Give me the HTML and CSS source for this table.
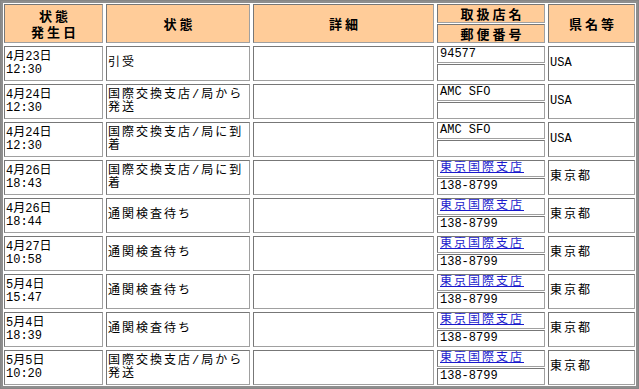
FILE: index.html
```html
<!DOCTYPE html>
<html lang="ja">
<head>
<meta charset="utf-8">
<title>追跡情報</title>
<link rel="stylesheet" href="styles.css">
</head>
<body>
<table class="track">
  <colgroup>
    <col class="c1"><col class="c2"><col class="c3"><col class="c4"><col class="c5">
  </colgroup>
  <thead>
    <tr class="head">
      <th class="h">状態<br>発生日</th>
      <th class="h">状態</th>
      <th class="h">詳細</th>
      <th class="split"><div class="pair"><div class="h sub">取扱店名</div><div class="h sub">郵便番号</div></div></th>
      <th class="h">県名等</th>
    </tr>
  </thead>
  <tbody>
    <tr>
      <td class="date">4月23日<br>12:30</td>
      <td class="st">引受</td>
      <td></td>
      <td class="split"><div class="pair"><div class="box">94577</div><div class="box"></div></div></td>
      <td class="pref">USA</td>
    </tr>
    <tr>
      <td class="date">4月24日<br>12:30</td>
      <td class="st">国際交換支店/局から発送</td>
      <td></td>
      <td class="split"><div class="pair"><div class="box">AMC SFO</div><div class="box"></div></div></td>
      <td class="pref">USA</td>
    </tr>
    <tr>
      <td class="date">4月24日<br>12:30</td>
      <td class="st">国際交換支店/局に到着</td>
      <td></td>
      <td class="split"><div class="pair"><div class="box">AMC SFO</div><div class="box"></div></div></td>
      <td class="pref">USA</td>
    </tr>
    <tr>
      <td class="date">4月26日<br>18:43</td>
      <td class="st">国際交換支店/局に到着</td>
      <td></td>
      <td class="split"><div class="pair"><div class="box"><a class="lk" href="#">東京国際支店</a></div><div class="box">138-8799</div></div></td>
      <td class="pref jp">東京都</td>
    </tr>
    <tr>
      <td class="date">4月26日<br>18:44</td>
      <td class="st">通関検査待ち</td>
      <td></td>
      <td class="split"><div class="pair"><div class="box"><a class="lk" href="#">東京国際支店</a></div><div class="box">138-8799</div></div></td>
      <td class="pref jp">東京都</td>
    </tr>
    <tr>
      <td class="date">4月27日<br>10:58</td>
      <td class="st">通関検査待ち</td>
      <td></td>
      <td class="split"><div class="pair"><div class="box"><a class="lk" href="#">東京国際支店</a></div><div class="box">138-8799</div></div></td>
      <td class="pref jp">東京都</td>
    </tr>
    <tr>
      <td class="date">5月4日<br>15:47</td>
      <td class="st">通関検査待ち</td>
      <td></td>
      <td class="split"><div class="pair"><div class="box"><a class="lk" href="#">東京国際支店</a></div><div class="box">138-8799</div></div></td>
      <td class="pref jp">東京都</td>
    </tr>
    <tr>
      <td class="date">5月4日<br>18:39</td>
      <td class="st">通関検査待ち</td>
      <td></td>
      <td class="split"><div class="pair"><div class="box"><a class="lk" href="#">東京国際支店</a></div><div class="box">138-8799</div></div></td>
      <td class="pref jp">東京都</td>
    </tr>
    <tr>
      <td class="date">5月5日<br>10:20</td>
      <td class="st">国際交換支店/局から発送</td>
      <td></td>
      <td class="split"><div class="pair"><div class="box"><a class="lk" href="#">東京国際支店</a></div><div class="box">138-8799</div></div></td>
      <td class="pref jp">東京都</td>
    </tr>
  </tbody>
</table>
</body>
</html>
```

FILE: styles.css
```css
html, body {
  margin: 0;
  padding: 0;
  background: #ffffff;
}

.track {
  width: 639px;
  table-layout: fixed;
  border-collapse: separate;
  border-spacing: 3px;
  border: 1px solid #868686;
  box-shadow: inset 0 0 0 2px #8e8e8e;
  background: #ffffff;
  font-family: "Liberation Mono", "Noto Sans CJK JP", monospace;
  font-size: 12px;
  line-height: 13px;
  color: #000000;
}

.c1 { width: 99px; }
.c2 { width: 144px; }
.c3 { width: 181px; }
.c4 { width: 108px; }
.c5 { width: 87px; }

.track th,
.track td {
  padding: 1px;
  border: 1px solid;
  border-color: #777777 #a0a0a0 #a0a0a0 #777777;
  vertical-align: middle;
  text-align: left;
  font-weight: normal;
}

.track thead tr { height: 39px; }
.track tbody tr { height: 35px; }

.track .h {
  background: #ffcc99;
  font-family: "Noto Sans CJK JP", sans-serif;
  font-weight: bold;
  font-size: 13px;
  line-height: 16px;
  letter-spacing: 3px;
  text-align: center;
  padding: 1px 0 1px 3px;
}

.track .split {
  padding: 0;
  border: 0;
  vertical-align: top;
}

.pair {
  display: flex;
  flex-direction: column;
  gap: 1px;
}

.box,
.sub {
  box-sizing: border-box;
  border: 1px solid;
  border-color: #777777 #a0a0a0 #a0a0a0 #777777;
  white-space: nowrap;
  overflow: hidden;
}

.box {
  height: 17px;
  padding: 0 2px;
  line-height: 15px;
}

.track .sub {
  height: 19px;
  line-height: 17px;
  padding: 0 0 0 3px;
}

.track .date { padding-left: 1px; }

.track .st { letter-spacing: 2px; }

.track .jp { letter-spacing: 2px; }

.lk {
  color: #1a1acc;
  text-decoration: underline;
  letter-spacing: 2px;
}
```
